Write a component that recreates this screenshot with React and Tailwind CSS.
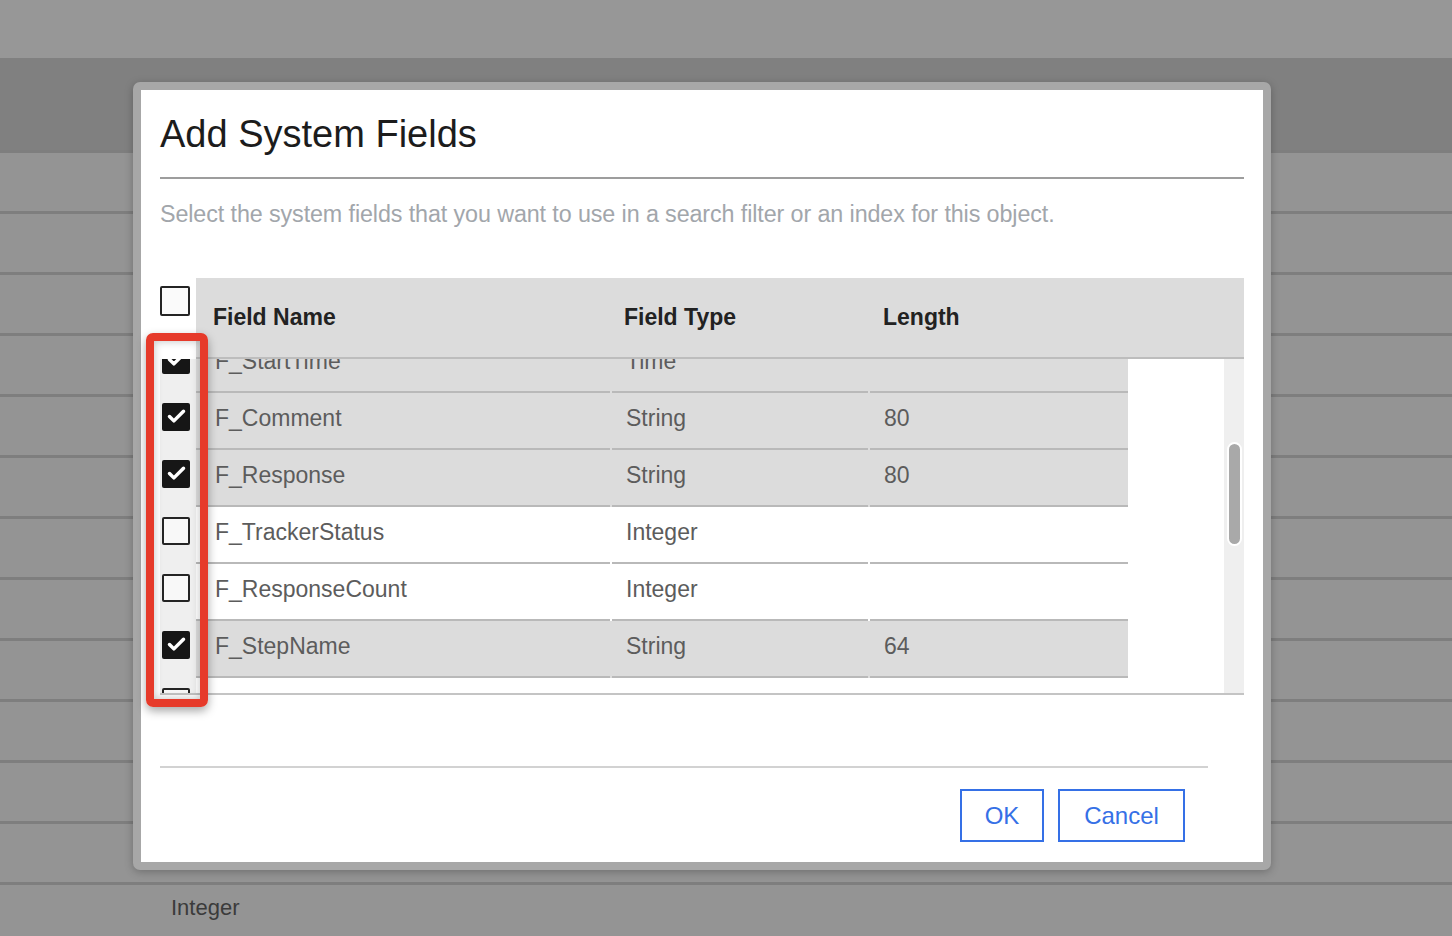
import { Check } from "lucide-react";

const ROWS = [
  { name: "F_StartTime", type: "Time", length: "", checked: true },
  { name: "F_Comment", type: "String", length: "80", checked: true },
  { name: "F_Response", type: "String", length: "80", checked: true },
  { name: "F_TrackerStatus", type: "Integer", length: "", checked: false },
  { name: "F_ResponseCount", type: "Integer", length: "", checked: false },
  { name: "F_StepName", type: "String", length: "64", checked: true },
  { name: "F_Overdue", type: "Boolean", length: "", checked: false },
];

const Checkbox = ({ checked }) =>
  checked ? (
    <div className="w-[28px] h-[28px] rounded-[2px] bg-[#161616] flex items-center justify-center">
      <Check size={21} strokeWidth={4} className="text-white" />
    </div>
  ) : (
    <div className="w-[28px] h-[28px] rounded-[2px] bg-[#f8f8f8] border-2 border-[#242424]" />
  );

const Row = ({ row }) => (
  <div className="flex h-[57px]">
    <div className="w-[36px] bg-[#efefef] flex items-center pl-[2px] pb-[10px]">
      <Checkbox checked={row.checked} />
    </div>
    <div
      className={`flex ${row.checked ? "bg-[#dcdcdc]" : "bg-white"}`}
    >
      <div className="w-[414px] mr-[2px] border-b-2 border-[#b9b9b9] flex items-center pl-[19px] pb-[4px] text-[23px] text-[#5c5c5c]">
        {row.name}
      </div>
      <div className="w-[256px] mr-[2px] border-b-2 border-[#b9b9b9] flex items-center pl-[14px] pb-[4px] text-[23px] text-[#5c5c5c]">
        {row.type}
      </div>
      <div className="w-[258px] border-b-2 border-[#b9b9b9] flex items-center pl-[14px] pb-[4px] text-[23px] text-[#5c5c5c]">
        {row.length}
      </div>
    </div>
  </div>
);

export default function App() {
  return (
    <div
      className="relative w-[1452px] h-[936px] overflow-hidden bg-[#949494]"
      style={{ fontFamily: '"Liberation Sans", Arial, sans-serif' }}
    >
      {/* dimmed page behind */}
      <div className="h-[58px] bg-[#979797]" />
      <div className="h-[92px] bg-[#808080]" />
      {Array.from({ length: 12 }).map((_, i) => (
        <div key={i} className="h-[61px] border-t-[3px] border-[#7e7e7e] bg-[#949494]" />
      ))}
      <div className="h-[61px] border-t-[3px] border-[#7e7e7e] bg-[#949494] flex">
        <div className="w-[171px]" />
        <div className="pt-[6px] text-[22px] text-[#3b3b3b]">Integer</div>
      </div>

      {/* modal */}
      <div className="absolute left-[133px] top-[82px] w-[1138px] h-[788px] rounded-[7px] bg-[#a7a7a7] p-[8px] shadow-[0_2px_8px_rgba(0,0,0,0.25)]">
        <div className="w-full h-full bg-white px-[19px] flex flex-col">
          <h2 className="mt-[25px] text-[38px] leading-[38px] text-[#1c1c1c]">
            Add System Fields
          </h2>
          <div className="mt-[24px] h-[2px] bg-[#9d9d9d]" />
          <p className="mt-[20px] text-[23.3px] leading-[30px] text-[#a2a6ab] tracking-[-0.1px]">
            Select the system fields that you want to use in a search filter or an index for this object.
          </p>

          {/* table header */}
          <div className="mt-[49px] flex">
            <div className="w-[36px] bg-white pt-[8px]">
              <div className="w-[30px] h-[30px] rounded-[2px] bg-[#fafafa] border-2 border-[#242424]" />
            </div>
            <div className="flex-1 h-[81px] bg-[#dcdcdc] border-b-2 border-[#bdbdbd] flex items-center font-bold text-[23px] text-[#222]">
              <div className="w-[416px] pl-[17px]">Field Name</div>
              <div className="w-[259px] pl-[12px]">Field Type</div>
              <div className="pl-[12px]">Length</div>
            </div>
          </div>

          {/* table body */}
          <div className="flex h-[334px] border-b-2 border-[#c4c4c4] box-content">
            <div className="w-[968px] overflow-hidden">
              <div className="-mt-[23px]">
                {ROWS.map((row) => (
                  <Row key={row.name} row={row} />
                ))}
              </div>
            </div>
            <div className="w-[96px] bg-white" />
            <div className="w-[20px] bg-[#efefef] flex flex-col items-center">
              <div className="mt-[83px] w-[15px] h-[104px] rounded-full bg-[#a9a9a9] border-2 border-white" />
            </div>
          </div>

          {/* footer */}
          <div className="mt-[71px] mr-[36px] h-[2px] bg-[#d2d2d2]" />
          <div className="mt-[21px] mr-[59px] flex justify-end gap-[14px]">
            <button
              type="button"
              className="w-[84px] h-[53px] border-2 border-[#3570e6] text-[24px] text-[#3570e6] bg-white"
            >
              OK
            </button>
            <button
              type="button"
              className="w-[127px] h-[53px] border-2 border-[#3570e6] text-[24px] text-[#3570e6] bg-white"
            >
              Cancel
            </button>
          </div>
        </div>
      </div>

      {/* red highlight around checkbox column */}
      <div className="absolute left-[146px] top-[333px] w-[62px] h-[374px] rounded-[7px] border-[8px] border-[#e63a2a] shadow-[0_4px_10px_rgba(0,0,0,0.35),inset_0_0_8px_rgba(0,0,0,0.25)]" />
    </div>
  );
}
